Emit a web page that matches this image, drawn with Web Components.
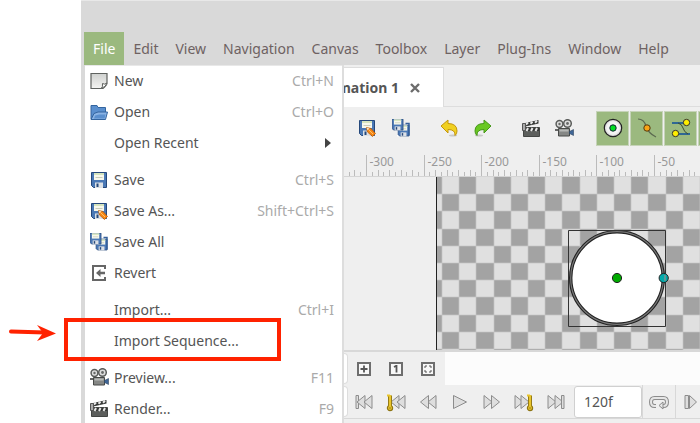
<!DOCTYPE html>
<html lang="en">
<head>
<meta charset="utf-8">
<title>Animation Studio</title>
<style>
html, body { margin: 0; height: 100%; background: #fff; }
body { font: 14px/20px "Noto Sans", "Open Sans", sans-serif; color: #555; overflow: hidden; }
</style>
</head>
<body>
<studio-app></studio-app>
<script>
const floppy = `<path d="M1.5 1.5h15v15h-13l-2-2z" fill="#4a78b5" stroke="#25487b"/><path d="M4 2h10v7H4z" fill="#f7f8ec"/><path d="M4 2h10v2H4z" fill="#d5e4bd"/><path d="M5.500 6.500h7" stroke="#c8ccba"/><path d="M5 11.500h8V17H5z" fill="#dde1e6"/><path d="M6.500 12.500h2V16h-2z" fill="#25487b"/>`;
const fwd = (x) => `<path d="M${x} 3.500l8 6.500-8 6.500z"/>`;
const back = (x) => `<path d="M${x} 3.500l-8 6.500 8 6.500z"/>`;
const grey = (s) => `<g fill="#dedede" stroke="#8c8c8c" stroke-linejoin="round">${s}</g>`;
const key = (x) => `<g transform="translate(${x} 10)"><path d="M0-6.500V6" stroke="#8d7414" stroke-width="4"/><circle cy="6" r="2.600" fill="#e9c52c" stroke="#8d7414" stroke-width="1.200"/><path d="M-3-6.500h3M0-7V5" stroke="#e9c52c" stroke-width="2.200"/><circle cy="6" r=".8" fill="#8d7414"/></g>`;
const frame = (s) => `<path d="M1 1h12v12H1z" fill="#f8f8f8" stroke="#6e6e6e" stroke-width="2"/>${s}`;
const ICONS = {
  new: [18, 18, `<defs><linearGradient id="p" x2="0" y2="1"><stop stop-color="#cfd1cf"/><stop offset="1" stop-color="#f4f4f2"/></linearGradient></defs><path d="M1 1.500h16v9.500q0 2-2 3.500l-2 2H1z" fill="url(#p)" stroke="#5f625f" stroke-width="1.200"/><path d="M11 16.500q2-1 1.500-5 2 1.500 4.500-.5-1 4-6 5.500z" fill="#fff" stroke="#5f625f"/>`],
  open: [18, 18, `<path d="M1 16V2.500h6l1 2h7.500V9" fill="#5a8fce" stroke="#34659f"/><path d="M1 16.500L4 10.500l4-1.500h9.500l-2 7.500z" fill="#8ab3e4" stroke="#34659f"/><path d="M4 15.500l1-3 4-1h6.500l-1 4z" fill="#5a8fce"/>`],
  save: [18, 18, floppy],
  saveas: [18, 18, floppy + `<path d="M8.500 8.500l4.500 1 4.500 5-3 3-5-4.500z" fill="#f58613" stroke="#b75b0b" stroke-width=".8"/><path d="M11 11l4 4" stroke="#ffc06a"/><path d="M8.500 8.500l1 3 2-2z" fill="#f5dfbd"/>`],
  saveall: [18, 18, `<g transform="translate(5 5) scale(.73)"><path d="M0 0h17v17H0z" fill="#fff"/>${floppy}</g><g transform="translate(-1 -1) scale(.73)">${floppy}</g><path d="M13.500 4.500h3.500v12" stroke="#35609b" stroke-width="1.500"/>`],
  revert: [18, 18, `<path d="M15 5V2H3v14h12v-3" stroke="#666" stroke-width="2"/><path d="M6 9l4.500-4v2.800H15v2.400h-4.500V13z" fill="#666"/>`],
  preview: [20, 19, `<g fill="#ddd" stroke="#5b5d5b" stroke-width="1.500"><circle cx="4.500" cy="5" r="3.400"/><circle cx="12.500" cy="4.500" r="3.800"/></g><g fill="#686a68"><circle cx="4.500" cy="5" r="1.200"/><circle cx="12.500" cy="4.500" r="1.400"/></g><path d="M3.500 9.500h11v7.500h-11z" fill="#858785" stroke="#474947"/><path d="M4.500 10.500h9v2h-9z" fill="#b6b8b6"/><path d="M14.500 12.500l4-2v6l-4-2z" fill="#3e6596" stroke="#31475f" stroke-width=".6"/><path d="M0 10h3v2H0z" fill="#666"/>`],
  render: [19, 19, `<path d="M1.500 8.500h16v9h-16z" fill="#5c5e5c" stroke="#444644"/><path d="M2 9h15v3H2z" fill="#353735"/><path d="M1 4.500L16.500 1v3.500L1 8z" fill="#353735"/><path d="M4 5.500l2-2M8.500 4.800l2-2M13 3.800l2-2M4.500 12l1.500-3M9 12l1.500-3M13.500 12l1.500-3" stroke="#e9e9e9" stroke-width="2"/><path d="M.5 4.500h3v7h-3z" fill="#aaa" stroke="#555"/>`],
  arrow: [6, 10, `<path d="M0 0l6 5-6 5z" fill="#444"/>`],
  undo: [18, 18, `<ellipse cx="13" cy="16.500" rx="4" ry="1" fill="#c8c8c8"/><path d="M1 7l7-6v3.500q9 0 9 7.500 0 3-2 4.500.5-6-7-6V14z" fill="#f0d021" stroke="#c4960b"/>`],
  redo: [18, 18, `<ellipse cx="5" cy="16.500" rx="4" ry="1" fill="#c8c8c8"/><path d="M17 7l-7-6v3.500q-9 0-9 7.500 0 3 2 4.500-.5-6 7-6V14z" fill="#69c822" stroke="#46961a"/>`],
  pos: [24, 24, `<defs><radialGradient id="g"><stop stop-color="#fff"/><stop offset=".7" stop-color="#f2f2f2"/><stop offset="1" stop-color="#ccc"/></radialGradient></defs><circle cx="12" cy="12" r="8.700" fill="url(#g)" stroke="#222" stroke-width="1.200"/><circle cx="12" cy="12" r="3.200" fill="#0d2" stroke="#123"/>`],
  vertex: [24, 24, `<path d="M3 3q6 0 8 7t10 11" stroke="#5b6950" stroke-width="1.200"/><circle cx="12" cy="12" r="3.200" fill="#f9a315" stroke="#543a10"/>`],
  tangent: [24, 24, `<path d="M3 7h14M7 18h14" stroke="#2f6794" stroke-width="2"/><path d="M9 7q4 1 5 5t5 6" stroke="#3c4c30"/><circle cx="17.500" cy="6.500" r="3.200" fill="#fe0" stroke="#333"/><circle cx="6.500" cy="17.500" r="3.200" fill="#fe0" stroke="#333"/>`],
  plus: [14, 14, frame(`<path d="M7 3.500v7M3.500 7h7" stroke="#555" stroke-width="1.800"/>`)],
  one: [14, 14, frame(`<path d="M5 5l2-1h.5v6.500" stroke="#555" stroke-width="1.800"/>`)],
  fit: [14, 14, frame(`<path d="M4 6V4h2M8 4h2v2M10 8v2H8M6 10H4V8" stroke="#555"/>`)],
  first: [20, 20, grey(`<path d="M2 3.500h2.500v13H2z"/>${back(11)}${back(18)}`)],
  prevkey: [20, 20, grey(back(13) + back(19)) + key(4)],
  prev: [20, 20, grey(back(10.5) + back(18))],
  play: [20, 20, grey(`<path d="M3.500 3.500l13 6.500-13 6.500z"/>`)],
  next: [20, 20, grey(fwd(2) + fwd(9.5))],
  nextkey: [20, 20, grey(fwd(1) + fwd(7)) + key(16)],
  last: [20, 20, grey(`${fwd(2)}${fwd(9)}<path d="M15.500 3.500H18v13h-2.500z"/>`)],
  loop: [20, 20, `<path d="M7 14H5.500Q2 14 2 10t3.500-4h9Q18 6 18 10t-3.500 4H12" stroke="#8c8c8c" stroke-width="4"/><path d="M7 14H5.500Q2 14 2 10t3.500-4h9Q18 6 18 10t-3.500 4H12" stroke="#e6e6e6" stroke-width="2"/><path d="M14 10v7l-4-3.500z" fill="#e6e6e6" stroke="#8c8c8c"/>`],
  bound: [20, 20, grey(`<path d="M3 3.500h3.500v13H3z"/><path d="M7.500 3.500l7 6.500-7 6.500z"/>`)],
  close: [10, 10, `<path d="M1 1l8 8M9 1L1 9" stroke="#6c6c6c" stroke-width="2.400"/>`]
};
const define = (name, render) => customElements.define(name, class extends HTMLElement {
  connectedCallback() {
    if (this.shadowRoot) return;
    this.attachShadow({ mode: "open" }).innerHTML = render(this);
  }
});
const reset = `button{font:inherit;color:inherit;border:0;padding:0;margin:0;background:none;text-align:left}`;

define("ui-icon", (el) => {
  const [w, h, body] = ICONS[el.getAttribute("name")];
  return `<style>:host{display:block;flex:none}svg{display:block}</style><svg width="${w}" height="${h}" viewBox="0 0 ${w} ${h}" fill="none" aria-hidden="true">${body}</svg>`;
});

define("menu-title", () => `<style>${reset}
:host{display:block;color:#6e6262}
button{height:33px;padding:0 8px 0 9px;white-space:nowrap}
:host([active]){background:#9bb97f;color:#fff}
:host([active]) button{padding-right:9px}
</style><button><slot></slot></button>`);

define("menu-row", (el) => `<style>${reset}
:host{display:block}
button{display:flex;align-items:center;width:100%;height:31px;padding:0 8px 0 5px;gap:5px}
.icon{width:19px;flex:none}
.label{flex:1;white-space:nowrap}
.key{color:#aaa}
ui-icon[name=arrow]{margin-right:3px}
</style><button role="menuitem"><span class="icon">${el.getAttribute("icon") ? `<ui-icon name="${el.getAttribute("icon")}"></ui-icon>` : ""}</span><span class="label"><slot></slot></span>${
  el.hasAttribute("submenu") ? `<ui-icon name="arrow"></ui-icon>` : `<span class="key">${el.getAttribute("key") || ""}</span>`}</button>`);

define("file-menu", () => `<style>
:host{display:block;background:#fff;box-shadow:inset 0 1px #e8e8e8;border-right:1px solid #ddd;overflow:hidden}
hr{border:0;margin:0;height:6px}
</style><div role="menu" aria-label="File">
<menu-row icon="new" key="Ctrl+N">New</menu-row>
<menu-row icon="open" key="Ctrl+O">Open</menu-row>
<menu-row submenu>Open Recent</menu-row><hr>
<menu-row icon="save" key="Ctrl+S">Save</menu-row>
<menu-row icon="saveas" key="Shift+Ctrl+S">Save As...</menu-row>
<menu-row icon="saveall">Save All</menu-row>
<menu-row icon="revert">Revert</menu-row><hr>
<menu-row key="Ctrl+I">Import...</menu-row>
<menu-row>Import Sequence...</menu-row><hr>
<menu-row icon="preview" key="F11">Preview...</menu-row>
<menu-row icon="render" key="F9">Render...</menu-row>
</div>`);

define("icon-button", (el) => `<style>${reset}
:host{display:block;flex:none;width:34px}
button{display:flex;align-items:center;justify-content:center;width:100%;height:33px}
:host([wide]){width:32px}
:host([on]){width:31px;background:#9bb97f;outline:1px solid #c6d3b9}
</style><button aria-label="${el.getAttribute("label")}"><ui-icon name="${el.getAttribute("icon")}"></ui-icon></button>`);

define("doc-tabs", () => `<style>${reset}
:host{display:flex;height:39px;padding-top:2px;border-bottom:1px solid #ddd;margin-bottom:-1px}
.tab{display:flex;align-items:center;justify-content:flex-end;gap:11px;width:76px;padding-right:23px;background:#fff;border:1px solid #ddd;border-width:1px 1px 0 0;margin-bottom:-1px}
.name{display:flex;justify-content:flex-end;flex:1;overflow:hidden;white-space:nowrap;font-weight:bold}
</style><div class="tab"><span class="name">mation 1</span><button aria-label="Close tab"><ui-icon name="close"></ui-icon></button></div>`);

define("tool-bar", () => `<style>
:host{display:flex;align-items:center;height:44px;padding-left:6px;overflow:hidden}
.gap{flex:none;width:14px}.toggles{display:flex;gap:3px;margin-left:15px}
</style>
<icon-button icon="saveas" label="Save as"></icon-button><icon-button icon="saveall" label="Save all"></icon-button><span class="gap"></span>
<icon-button icon="undo" label="Undo"></icon-button><icon-button icon="redo" label="Redo"></icon-button><span class="gap"></span>
<icon-button icon="render" label="Render"></icon-button><icon-button icon="preview" label="Preview"></icon-button>
<div class="toggles"><icon-button on icon="pos" label="Position handles"></icon-button><icon-button on icon="vertex" label="Vertex handles"></icon-button><icon-button on icon="tangent" label="Tangent handles"></icon-button><icon-button on icon="pos" label="Radius handles"></icon-button></div>`);

define("time-ruler", () => {
  let s = "";
  for (let i = -3; i < 140; i++) {
    const x = Math.round(22 + i * 5.76) + 0.5;
    const major = i % 10 === 0;
    s += `<path d="M${x} ${major ? 5 : i % 2 ? 22 : 20}V26" stroke="#bbb"/>`;
    if (major && i <= 50) s += `<text x="${x + 3}" y="16">${-300 + i * 5}</text>`;
  }
  return `<style>:host{display:block;height:27px;border-bottom:1px solid #d4d4d4;box-sizing:border-box}svg{display:block;width:100%;height:26px}text{font:12px "Noto Sans",sans-serif;fill:#999}</style><svg>${s}</svg>`;
});

define("work-canvas", () => {
  let dark = "", grid = "";
  const at = (k) => Math.round(k * 17.2);
  for (let i = -1; i < 60; i++) {
    if (i >= 0) grid += `M${98 + at(i)} 0v2000`;
    for (let j = 0; j < 40; j++) if ((i + j) % 2) {
      const x = Math.max(93, 98 + at(i));
      dark += `M${x} ${at(j)}H${98 + at(i + 1)}V${at(j + 1)}H${x}z`;
    }
  }
  for (let j = 1; j < 40; j++) grid += `M93 ${at(j)}h2000`;
  return `<style>:host{display:block;flex:1;min-height:0;overflow:hidden;border-bottom:2px solid #d8d8d8}svg{display:block;width:100%;height:100%}</style>
<svg role="img" aria-label="Canvas with a circle"><rect x="93" width="100%" height="100%" fill="#e0e0e0"/><path d="${dark}" fill="#a3a3a3"/><path d="${grid}" stroke="#c4c4c4" stroke-opacity=".7"/><path d="M92.500 0v2000" stroke="#222"/>
<circle cx="273" cy="101" r="46.300" fill="#fff" stroke="#222" stroke-width="3.400"/><circle cx="273" cy="101" r="46.300" fill="none" stroke="#777" stroke-width="1.200"/>
<path d="M224.500 53.500h97v96h-97z" fill="none" stroke="#333"/>
<circle cx="273" cy="101" r="4.600" fill="#0a0" stroke="#222"/><circle cx="319.700" cy="101" r="4.600" fill="#0aa" stroke="#222"/><path d="M321 98v6" stroke="#b88"/></svg>`;
});

define("play-bar", () => `<style>
:host{display:block;background:#efefef;padding-bottom:4px}
.row{display:flex;height:33px;align-items:center;overflow:hidden}
.grip{flex:none;width:4px;height:31px;background:#fff;border:1px solid #ddd;border-left:0;border-radius:0 4px 4px 0;box-sizing:border-box}
.view .keys{display:flex;flex:none;padding-right:1px}
.track{flex:1;align-self:stretch;background:#fcfcfc}
.play{border-bottom:1px solid #d8d8d8}
input{flex:none;width:68px;height:32px;box-sizing:border-box;border:1px solid #d0d0d0;border-radius:3px;background:#fff;padding:0 9px;margin:0 0 0 2px;font:inherit;color:#555}
.edge{border-left:1px solid #d8d8d8}
</style><div class="row view"><span class="grip"></span><div class="keys"><icon-button wide icon="plus" label="Add keyframe"></icon-button><icon-button wide icon="one" label="Zoom to 100%"></icon-button><icon-button wide icon="fit" label="Zoom to fit"></icon-button></div><span class="track"></span></div>
<div class="row play"><span class="grip"></span>${[["first", "First frame"], ["prevkey", "Previous keyframe"], ["prev", "Previous frame"], ["play", "Play"], ["next", "Next frame"], ["nextkey", "Next keyframe"], ["last", "Last frame"]].map(([i, l]) => `<icon-button wide icon="${i}" label="${l}"></icon-button>`).join("")}<input aria-label="End time" value="120f"><icon-button class="edge" wide icon="loop" label="Loop"></icon-button><icon-button class="edge" wide icon="bound" label="Play bounds"></icon-button></div>`);

define("callout-mark", () => `<style>:host{position:absolute;left:8px;top:318px}svg{display:block}</style>
<svg width="274" height="44" aria-hidden="true"><path d="M58 2h213v39H58z" fill="none" stroke="#ff2200" stroke-width="4"/><path d="M3 13.500l34 1" stroke="#ff2200" stroke-width="4" stroke-linecap="round"/><path d="M29 7l19 8.500-19 7.500 6-8z" fill="#ff2200"/></svg>`);

define("studio-app", () => `<style>
:host{display:block;height:100%}
.window{display:flex;flex-direction:column;height:100%;box-sizing:border-box;margin-left:81px;background:#d9d9d9;border-top:1px solid #e8e8e8;overflow:hidden}
.title{flex:none;height:31px}
nav{display:flex;flex:none;padding-left:3px}
main{display:grid;grid-template-columns:258px 1fr;flex:1;min-height:0;padding-left:4px}
.work{display:flex;flex-direction:column;min-width:0;min-height:0;background:#efefef;border-left:1px solid #ddd}
</style><div class="window"><header class="title"></header>
<nav aria-label="Main menu"><menu-title active>File</menu-title>${["Edit", "View", "Navigation", "Canvas", "Toolbox", "Layer", "Plug-Ins", "Window", "Help"].map((t) => `<menu-title>${t}</menu-title>`).join("")}</nav>
<main><file-menu></file-menu><section class="work"><doc-tabs></doc-tabs><tool-bar></tool-bar><time-ruler></time-ruler><work-canvas></work-canvas><play-bar></play-bar></section></main></div>
<callout-mark></callout-mark>`);
</script>
</body>
</html>
